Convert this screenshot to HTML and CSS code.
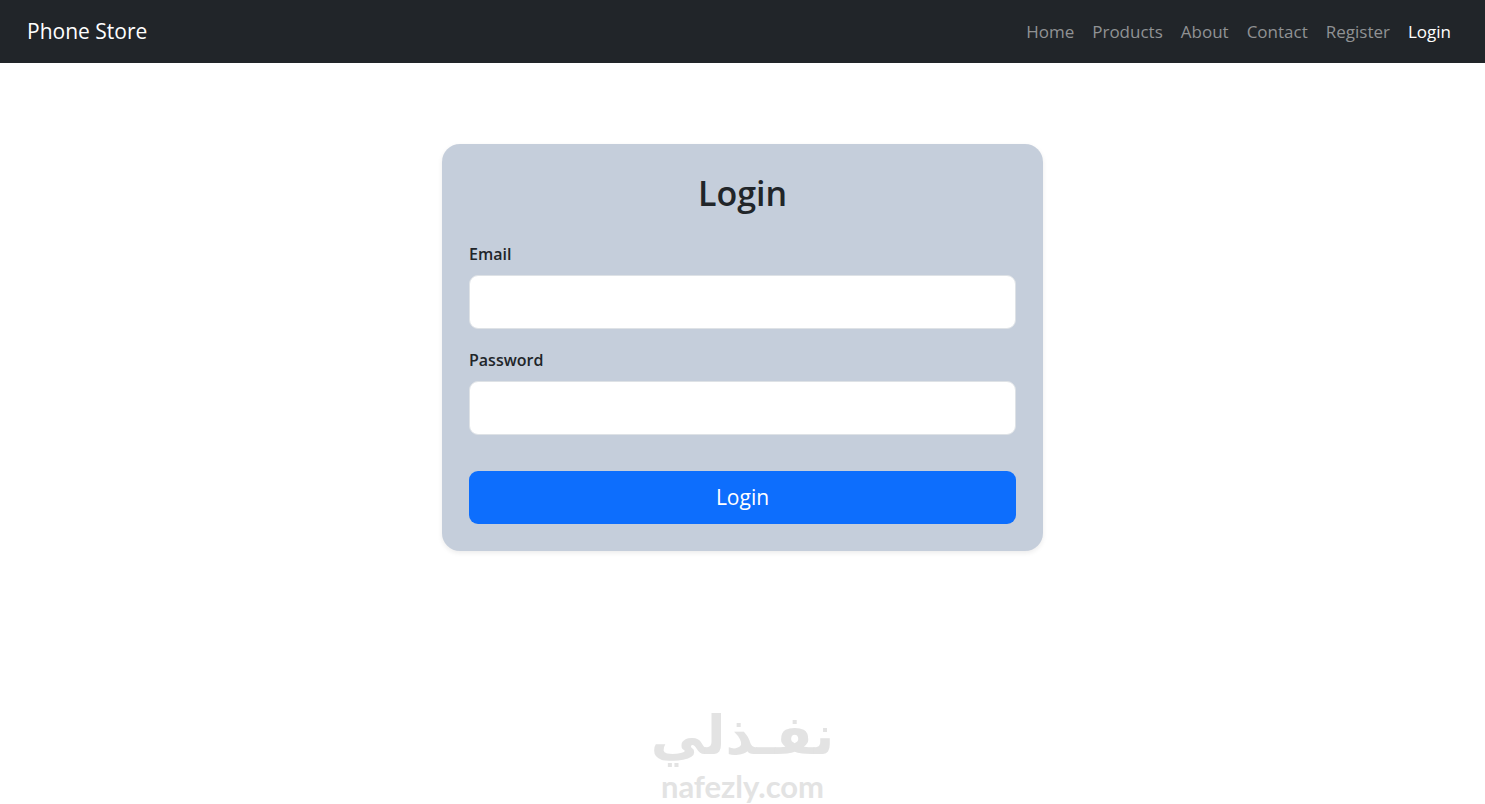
FILE: index.html
```html
<!DOCTYPE html>
<html lang="en">
<head>
  <meta charset="UTF-8" />
  <meta name="viewport" content="width=device-width, initial-scale=1" />
  <title>Phone Store - Login</title>
  <link rel="stylesheet" href="styles.css">
</head>
<body>

  <nav class="navbar">
    <a class="navbar-brand" href="index.html">Phone Store</a>
    <ul class="navbar-nav">
      <li><a class="nav-link" href="index.html">Home</a></li>
      <li><a class="nav-link" href="products.html">Products</a></li>
      <li><a class="nav-link" href="about.html">About</a></li>
      <li><a class="nav-link" href="contact.html">Contact</a></li>
      <li><a class="nav-link" href="register.html">Register</a></li>
      <li><a class="nav-link active" href="login.html">Login</a></li>
    </ul>
  </nav>

  <main class="login-page">
    <form class="login-card">
      <h2>Login</h2>

      <div class="form-group">
        <label for="email">Email</label>
        <input type="email" id="email" class="form-control">
      </div>

      <div class="form-group">
        <label for="password">Password</label>
        <input type="password" id="password" class="form-control">
      </div>

      <button type="submit" class="btn-login">Login</button>
    </form>
  </main>

  <footer class="brand-mark">
    <span class="brand-name" lang="ar" dir="rtl">نفـذلي</span>
    <span class="brand-site">nafezly.com</span>
  </footer>

</body>
</html>
```

FILE: styles.css
```css
* {
  box-sizing: border-box;
}
body {
  margin: 0;
  min-height: 100vh;
  display: flex;
  flex-direction: column;
  font-family: "Segoe UI", "Open Sans", "Noto Sans", sans-serif;
  font-size: 17px;
  line-height: 27px;
  color: #212529;
  background: #fff;
}

/* Navbar */
.navbar {
  display: flex;
  align-items: center;
  justify-content: space-between;
  min-height: 63px;
  padding: 0 34px 0 27px;
  background: #212529;
}
.navbar-brand {
  font-size: 21px;
  color: #fff;
  text-decoration: none;
}
.navbar-nav {
  display: flex;
  gap: 18px;
  margin: 0;
  padding: 0;
  list-style: none;
}
.nav-link {
  color: #909294;
  text-decoration: none;
}
.nav-link:hover,
.nav-link.active {
  color: #fff;
}

/* Login form */
.login-page {
  padding: 81px 16px 32px;
}
.login-card {
  max-width: 601px;
  margin: 0 auto;
  padding: 27px;
  background: #c5cedb;
  border-radius: 18px;
  box-shadow: 0 2px 5px rgba(0,0,0,0.08);
}
h2 {
  margin: 0 0 26px;
  font-size: 34px;
  font-weight: 600;
  line-height: 44px;
  text-align: center;
}
.form-group {
  margin-bottom: 18px;
}
label {
  display: block;
  margin-bottom: 7px;
  font-size: 16px;
  font-weight: 600;
}
.form-control {
  display: block;
  width: 100%;
  height: 54px;
  padding: 8px 18px;
  font: inherit;
  font-size: 21px;
  color: #212529;
  background: #fff;
  border: 1px solid #dee2e6;
  border-radius: 9px;
}
.btn-login {
  display: block;
  width: 100%;
  height: 53px;
  margin-top: 36px;
  font: inherit;
  font-size: 21px;
  color: #fff;
  background: #0d6efd;
  border: none;
  border-radius: 9px;
  cursor: pointer;
}
.btn-login:hover {
  background: #0b5ed7;
}

/* Brand mark at the bottom */
.brand-mark {
  display: flex;
  flex-direction: column;
  align-items: center;
  margin-top: auto;
  color: #e3e3e3;
}
.brand-name {
  font-family: "DejaVu Sans", sans-serif;
  font-size: 54px;
  font-weight: 700;
  line-height: 64px;
}
.brand-site {
  font-family: Lato, sans-serif;
  font-size: 31px;
  font-weight: 700;
  line-height: 36px;
}
```
